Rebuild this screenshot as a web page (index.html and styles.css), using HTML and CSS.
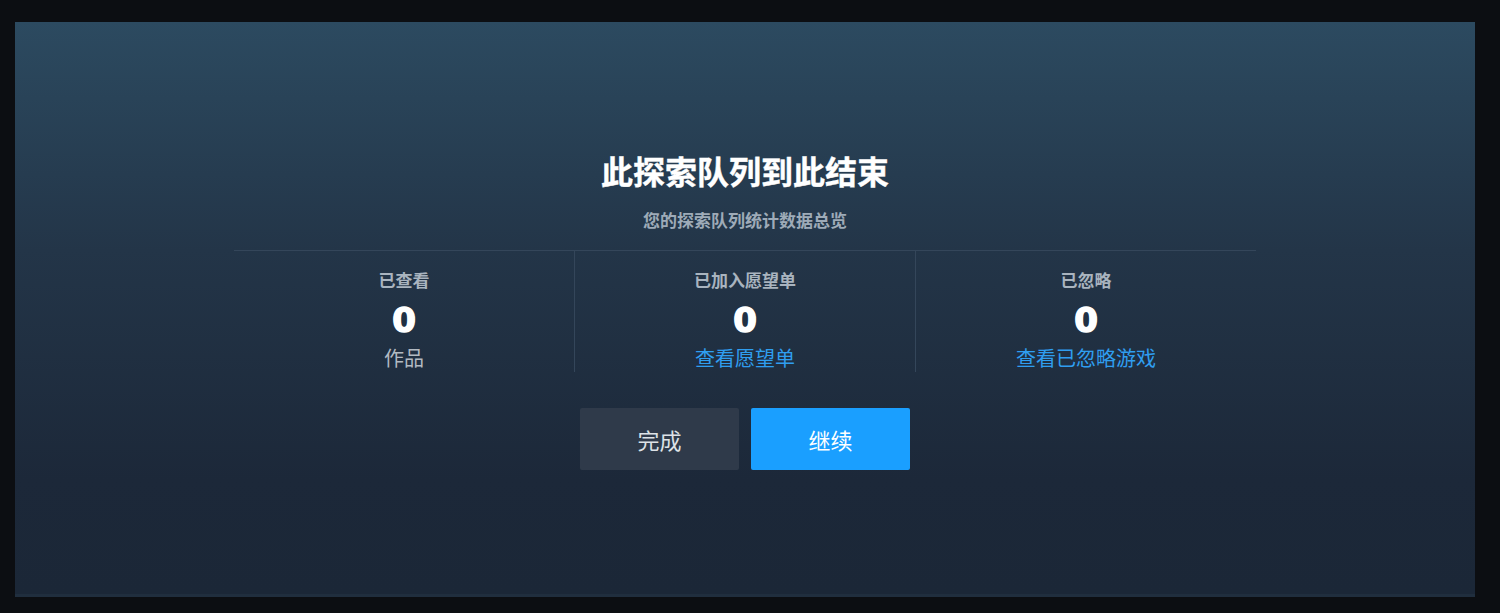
FILE: index.html
```html
<!DOCTYPE html>
<html lang="zh-CN">
<head>
<meta charset="UTF-8">
<meta name="viewport" content="width=device-width, initial-scale=1.0">
<title>探索队列</title>
<link rel="stylesheet" href="styles.css">
</head>
<body>

<div class="panel">
  <h1>此探索队列到此结束</h1>
  <div class="subtitle">您的探索队列统计数据总览</div>

  <div class="stats">
    <div class="stat">
      <div class="label">已查看</div>
      <div class="num">0</div>
      <div class="note">作品</div>
    </div>
    <div class="stat">
      <div class="label">已加入愿望单</div>
      <div class="num">0</div>
      <a class="link" href="#">查看愿望单</a>
    </div>
    <div class="stat">
      <div class="label">已忽略</div>
      <div class="num">0</div>
      <a class="link" href="#">查看已忽略游戏</a>
    </div>
  </div>

  <div class="buttons">
    <button class="btn-done">完成</button>
    <button class="btn-go">继续</button>
  </div>
</div>

</body>
</html>
```

FILE: styles.css
```css
body {
  margin: 0;
  height: 613px;
  padding: 22px 25px 0 15px;
  box-sizing: border-box;
  background: #0c0e12;
  font-family: "Noto Sans", "Noto Sans CJK SC", sans-serif;
  overflow: hidden;
}

.panel {
  height: 575px;
  box-sizing: border-box;
  padding-top: 131px;
  background: linear-gradient(180deg, #2c4a60 0%, #233548 40%, #1c2839 80%, #1b2737 100%);
  border-bottom: 3px solid #202e3e;
  display: flex;
  flex-direction: column;
  align-items: center;
}

h1 {
  margin: 0;
  font-size: 32px;
  line-height: 37px;
  font-weight: 700;
  color: #fff;
  -webkit-text-stroke: 0.4px #fff;
}

.subtitle {
  margin-top: 21px;
  font-size: 17px;
  line-height: 20px;
  font-weight: 700;
  color: #9eabb8;
}

.stats {
  margin-top: 19px;
  width: 1022px;
  border-top: 1px solid #34465a;
  display: flex;
}

.stat {
  flex: 1;
  display: flex;
  flex-direction: column;
  align-items: center;
  padding: 20px 0 1px;
}

.stat + .stat {
  border-left: 1px solid #34465a;
}

.label {
  font-size: 17px;
  line-height: 20px;
  font-weight: 700;
  color: #a9b4bf;
}

.num {
  margin-top: 10px;
  font-family: "DejaVu Sans", sans-serif;
  font-size: 34px;
  line-height: 38px;
  font-weight: 700;
  color: #fff;
  -webkit-text-stroke: 1.5px #fff;
}

.note, .link {
  margin-top: 8px;
  font-size: 20px;
  line-height: 24px;
  color: #b2bac2;
}

.link {
  color: #2f9ef0;
  text-decoration: none;
}

.buttons {
  margin-top: 36px;
  display: flex;
  gap: 12px;
}

.buttons button {
  width: 159px;
  height: 62px;
  border: none;
  border-radius: 2px;
  font-family: inherit;
  font-size: 22px;
  cursor: pointer;
}

.btn-done {
  background: #2f3a4a;
  color: #dde2e7;
}

.btn-go {
  background: #1a9fff;
  color: #fff;
}
```
